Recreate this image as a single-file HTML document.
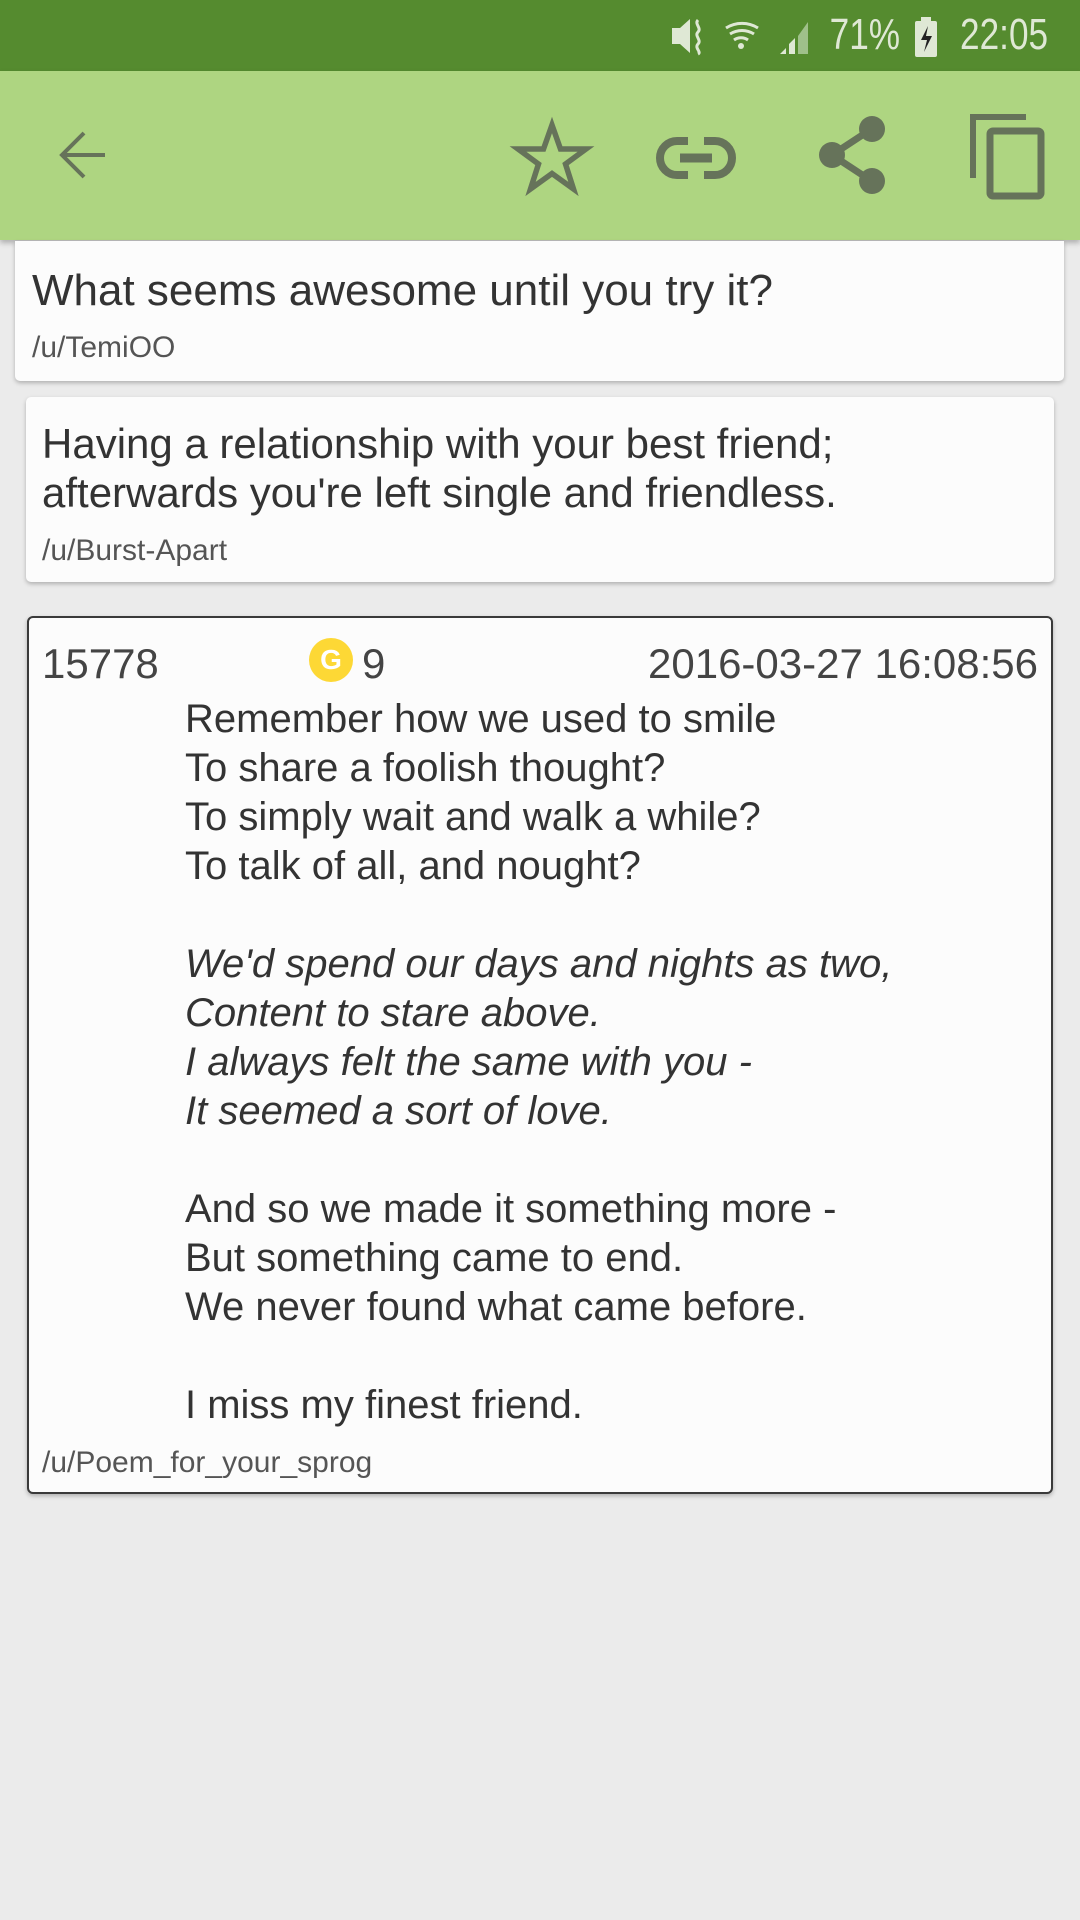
<!DOCTYPE html>
<html><head><meta charset="utf-8"><style>
*{margin:0;padding:0;box-sizing:border-box}
body{width:1080px;height:1920px;background:#ebebeb;font-family:"Liberation Sans",sans-serif;position:relative;overflow:hidden;color:#333}
.abs{position:absolute;white-space:nowrap}
.sb{position:absolute;left:0;top:0;width:1080px;height:71px;background:#558b2f}
.tb{position:absolute;left:0;top:71px;width:1080px;height:169px;background:#aed581;box-shadow:0 3px 5px rgba(0,0,0,.25)}
.card{position:absolute;background:#fcfcfc;border-radius:5px;box-shadow:0 2px 4px rgba(0,0,0,.25)}
.a{font-size:30px;line-height:34px;color:#555}
.p{font-size:40px;line-height:49px;color:#333}
.st{font-size:44px;line-height:50px;color:#dfe8d5;transform:scaleX(.8);transform-origin:right;top:10px}
</style></head><body>
<div class="sb"></div>
<div class="abs st" style="right:32px">22:05</div>
<div class="abs st" style="right:180px">71%</div>
<svg class="abs" style="left:913px;top:16px" width="26" height="42" viewBox="0 0 26 42"><rect x="2" y="5" width="22" height="36" rx="2" fill="#dfe8d5"/><rect x="8" y="1" width="10" height="5" fill="#dfe8d5"/><path d="M15 10l-7 14h6l-3 12 8-16h-6z" fill="#222"/></svg>
<svg class="abs" style="left:668px;top:16px" width="150" height="40" viewBox="0 0 150 40">
<path d="M4 12h8l10-9v34l-10-9H4z" fill="#dfe8d5"/><path d="M30 4c-4 4 4 8 0 12s4 8 0 12s4 8 0 10" stroke="#dfe8d5" stroke-width="3" fill="none"/>
<path d="M58 12a30 30 0 0 1 32 0M62 18a22 22 0 0 1 24 0M66 24a12 12 0 0 1 14 0" stroke="#dfe8d5" stroke-width="3" fill="none"/><circle cx="73" cy="30" r="3" fill="#dfe8d5"/>
<path d="M112 38l6-6v6zM121 38V28l6-6v16z" fill="#dfe8d5"/><path d="M130 38V20l10-14v32z" fill="#9fc08a"/></svg>
<div class="tb"></div>
<svg class="abs" style="left:0;top:71px" width="1080" height="169" viewBox="0 71 1080 169" fill="none" stroke="#66735a">
<path d="M105 155H62M84 133l-22 22 22 22" stroke-width="4"/>
<path d="M552 125l8.5 24h25.5l-20.5 15 8 25-21.5-15.5-21.5 15.5 8-25-20.5-15h25.5z" stroke-width="5.5"/>
<rect x="660" y="141" width="72" height="34" rx="17" stroke-width="8"/><rect x="688" y="135" width="16" height="46" fill="#aed581" stroke="none"/><path d="M680 158h32" stroke-width="9"/>
<path d="M870 130L832 155L870 180" stroke-width="7"/><circle cx="872" cy="129" r="13" fill="#66735a" stroke="none"/><circle cx="832" cy="155" r="13" fill="#66735a" stroke="none"/><circle cx="872" cy="181" r="13" fill="#66735a" stroke="none"/>
<path d="M973 178V117h53" stroke-width="6"/><rect x="990" y="131" width="51" height="65" rx="3" stroke-width="7"/>
</svg>

<div class="card" style="left:15px;top:241px;width:1049px;height:140px;border-radius:0 0 5px 5px"></div>
<div class="abs" style="left:32px;top:266px;font-size:44px;line-height:49px">What seems awesome until you try it?</div>
<div class="abs a" style="left:32px;top:331px">/u/TemiOO</div>

<div class="card" style="left:26px;top:397px;width:1028px;height:185px"></div>
<div class="abs" style="left:42px;top:419px;font-size:42px;line-height:49px">Having a relationship with your best friend;<br>afterwards you're left single and friendless.</div>
<div class="abs a" style="left:42px;top:534px">/u/Burst-Apart</div>

<div class="card" style="left:27px;top:616px;width:1026px;height:878px;border:2.5px solid #3a3a3a;border-radius:6px"></div>
<div class="abs" style="left:42px;top:639px;font-size:42px;line-height:49px;color:#444">15778</div>
<div class="abs" style="left:309px;top:638px;width:44px;height:44px;border-radius:50%;background:#fdd835;color:#fff;font-weight:bold;font-size:28px;line-height:44px;text-align:center">G</div>
<div class="abs" style="left:362px;top:639px;font-size:42px;line-height:49px;color:#444">9</div>
<div class="abs" style="right:42px;top:639px;font-size:42px;line-height:49px;color:#444">2016-03-27 16:08:56</div>
<div class="abs p" style="left:185px;top:695px">Remember how we used to smile<br>To share a foolish thought?<br>To simply wait and walk a while?<br>To talk of all, and nought?<br><br><i>We'd spend our days and nights as two,<br>Content to stare above.<br>I always felt the same with you -<br>It seemed a sort of love.</i><br><br>And so we made it something more -<br>But something came to end.<br>We never found what came before.<br><br>I miss my finest friend.</div>
<div class="abs a" style="left:42px;top:1446px">/u/Poem_for_your_sprog</div>
</body></html>
